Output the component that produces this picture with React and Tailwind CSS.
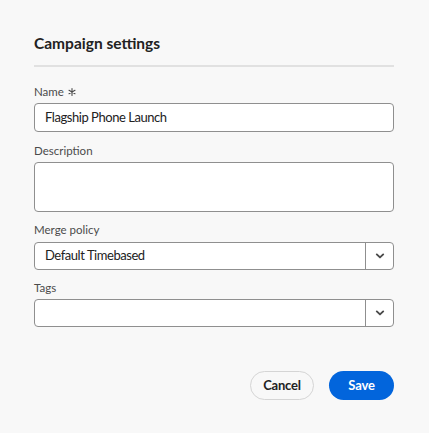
import React from "react";

const font = { fontFamily: "Lato, 'Liberation Sans', sans-serif" };

const Chevron = () => (
  <svg width="10" height="10" viewBox="0 0 10 10" fill="none">
    <path d="M1.8 3.4 5 6.4 8.2 3.4" stroke="#4b4b4b" strokeWidth="1.9" strokeLinecap="round" strokeLinejoin="round" />
  </svg>
);

const Label = ({ children, className = "mb-[4px]" }) => (
  <div className={`h-[14px] flex items-center text-[11.5px] leading-[14px] text-[#4b4b4b] ${className}`}>
    {children}
  </div>
);

const Picker = ({ value }) => (
  <div className="flex h-[28px] rounded-[4px] border border-[#8f8f8f] bg-white overflow-hidden">
    <div className="flex-1 flex items-center px-[10px] text-[13px] tracking-[-0.45px] text-[#222]">{value}</div>
    <div className="w-[28px] border-l border-[#8f8f8f] flex items-center justify-center">
      <Chevron />
    </div>
  </div>
);

export default function App() {
  return (
    <div className="w-[429px] h-[433px] bg-[#f8f8f8] pl-[34px] pr-[35px] pt-[34px]" style={font}>
      <h2 className="text-[15.5px] leading-[18px] font-bold text-[#222]">Campaign settings</h2>
      <div className="mt-[13px] h-[2px] bg-[#e1e1e1]" />

      <div className="mt-[18px]">
        <Label>
          Name
          <svg className="ml-[4px]" width="8" height="8" viewBox="0 0 8 8">
            <path d="M4 0.6v6.8M1 2.3l6 3.4M7 2.3 1 5.7" stroke="#4b4b4b" strokeWidth="1.1" strokeLinecap="round" />
          </svg>
        </Label>
        <div className="h-[29px] rounded-[4px] border border-[#8f8f8f] bg-white flex items-center px-[10px] text-[13px] tracking-[-0.45px] text-[#222]">
          Flagship Phone Launch
        </div>
      </div>

      <div className="mt-[12px]">
        <Label>Description</Label>
        <div className="h-[50px] rounded-[4px] border border-[#8f8f8f] bg-white" />
      </div>

      <div className="mt-[11px]">
        <Label className="mb-[5px]">Merge policy</Label>
        <Picker value="Default Timebased" />
      </div>

      <div className="mt-[11px]">
        <Label>Tags</Label>
        <Picker value="" />
      </div>

      <div className="mt-[44px] flex justify-end gap-[15px]">
        <button className="h-[29px] w-[64px] rounded-full border border-[#d5d5d5] text-[13px] font-bold tracking-[-0.2px] text-[#222]">
          Cancel
        </button>
        <button className="h-[29px] w-[65px] rounded-full bg-[#0265dc] text-[13px] font-bold tracking-[-0.2px] text-white">
          Save
        </button>
      </div>
    </div>
  );
}
